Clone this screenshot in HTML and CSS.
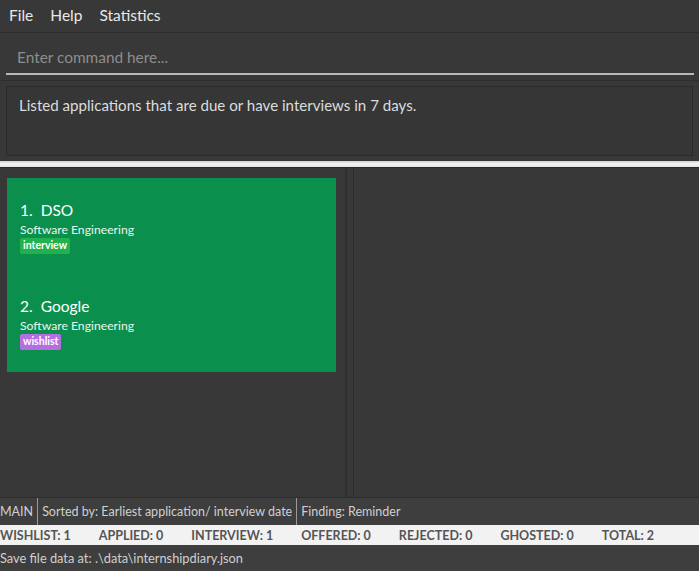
FILE: index.html
```html
<!DOCTYPE html>
<html lang="en">
<head>
<meta charset="utf-8">
<title>Internship Diary</title>
<link rel="stylesheet" href="styles.css">
</head>
<body>
<div class="app">
  <nav class="menubar">
    <span class="menu-item">File</span>
    <span class="menu-item">Help</span>
    <span class="menu-item">Statistics</span>
  </nav>
  <div class="command">
    <div class="command-input">Enter command here...</div>
  </div>
  <div class="result-wrap">
    <div class="result">Listed applications that are due or have interviews in 7 days.</div>
  </div>
  <div class="band"></div>
  <div class="main">
    <section class="list-panel">
      <div class="card">
        <div class="entry">
          <div class="entry-title"><span class="idx">1.</span>DSO</div>
          <div class="entry-role">Software Engineering</div>
          <span class="tag tag-interview">interview</span>
        </div>
        <div class="entry">
          <div class="entry-title"><span class="idx">2.</span>Google</div>
          <div class="entry-role">Software Engineering</div>
          <span class="tag tag-wishlist">wishlist</span>
        </div>
      </div>
    </section>
    <div class="splitter"></div>
    <section class="detail-panel"></section>
  </div>
  <div class="statusbar">
    <span class="status-cell">MAIN</span>
    <span class="status-cell">Sorted by: Earliest application/ interview date</span>
    <span class="status-cell last">Finding: Reminder</span>
  </div>
  <div class="stats">
    <span>WISHLIST: 1</span>
    <span>APPLIED: 0</span>
    <span>INTERVIEW: 1</span>
    <span>OFFERED: 0</span>
    <span>REJECTED: 0</span>
    <span>GHOSTED: 0</span>
    <span>TOTAL: 2</span>
  </div>
  <div class="savebar">Save file data at: .\data\internshipdiary.json</div>
</div>
</body>
</html>
```

FILE: styles.css
```css
* { box-sizing: border-box; }
html, body {
  margin: 0;
  padding: 0;
  background: #383838;
}
body {
  font-family: Lato, "Noto Sans", "Liberation Sans", sans-serif;
  color: #e6e6e6;
}
.app {
  width: 699px;
  height: 571px;
  display: flex;
  flex-direction: column;
  overflow: hidden;
}
.app > * { flex-shrink: 0; }
.menubar {
  height: 33px;
  background: #383838;
  border-bottom: 1px solid #2c2c2c;
  display: flex;
  align-items: center;
  gap: 17px;
  padding-left: 9px;
  padding-bottom: 2px;
  font-size: 15.5px;
  color: #e8e8e8;
}
.command {
  height: 48px;
  padding: 6px 5px 0 6px;
  background: #383838;
  border-bottom: 1px solid #2f2f2f;
}
.command-input {
  height: 36px;
  border-bottom: 2px solid #b8b8b8;
  padding: 9px 0 0 11px;
  font-size: 15.4px;
  color: #8d8d8d;
}
.result-wrap {
  padding: 5px 6px 0 6px;
  height: 80px;
}
.result {
  height: 70px;
  border: 1px solid #2a2a2a;
  background: #363636;
  padding: 9px 0 0 12px;
  font-size: 15.1px;
  color: #dcdcdc;
}
.band {
  height: 7px;
  background: linear-gradient(#cfcfcf, #f4f4f4 40%, #e2e2e2 85%, #2a2a2a 86%);
}
.main {
  height: 329px;
  display: flex;
}
.list-panel {
  width: 346px;
  padding: 10px 0 0 7px;
  background: #383838;
  border-right: 1px solid #2f2f2f;
}
.card {
  width: 329px;
  height: 194px;
  background: #0b8f4d;
  padding: 22px 0 0 13px;
  display: flex;
  flex-direction: column;
  gap: 42px;
}
.entry {
  display: flex;
  flex-direction: column;
  align-items: flex-start;
}
.entry-title {
  font-size: 15.5px;
  color: #ffffff;
  line-height: 20px;
}
.idx { margin-right: 8px; }
.entry-role {
  font-size: 12.2px;
  color: #eaf5ee;
  line-height: 17px;
  margin-top: 1px;
}
.tag {
  font-size: 10.5px;
  font-weight: 700;
  color: #ffffff;
  padding: 1px 3px 2px 3px;
  border-radius: 2px;
  line-height: 13px;
}
.tag-interview { background: #22b14f; }
.tag-wishlist { background: #b46ee0; }
.splitter {
  width: 8px;
  background: #383838;
  border-left: 1px solid #2f2f2f;
  border-right: 1px solid #2c2c2c;
}
.detail-panel {
  flex: 1;
  background: #383838;
}
.statusbar {
  height: 28px;
  background: #3e3e3e;
  border-top: 1px solid #2c2c2c;
  display: flex;
  align-items: center;
  font-size: 12.5px;
  color: #d0d0d0;
  white-space: nowrap;
}
.status-cell {
  height: 100%;
  display: flex;
  align-items: center;
  padding: 0 4px 0 4px;
  border-right: 1px solid #9a9a9a;
}
.status-cell:first-child { padding-left: 0; }
.status-cell.last { border-right: none; }
.stats {
  height: 20px;
  background: #f2f2f2;
  display: flex;
  align-items: center;
  gap: 28px;
  font-size: 12.5px;
  font-weight: 700;
  color: #555555;
  white-space: nowrap;
}
.savebar {
  height: 26px;
  background: #3e3e3e;
  font-size: 12.8px;
  color: #d0d0d0;
  display: flex;
  align-items: center;
  white-space: nowrap;
}
```
